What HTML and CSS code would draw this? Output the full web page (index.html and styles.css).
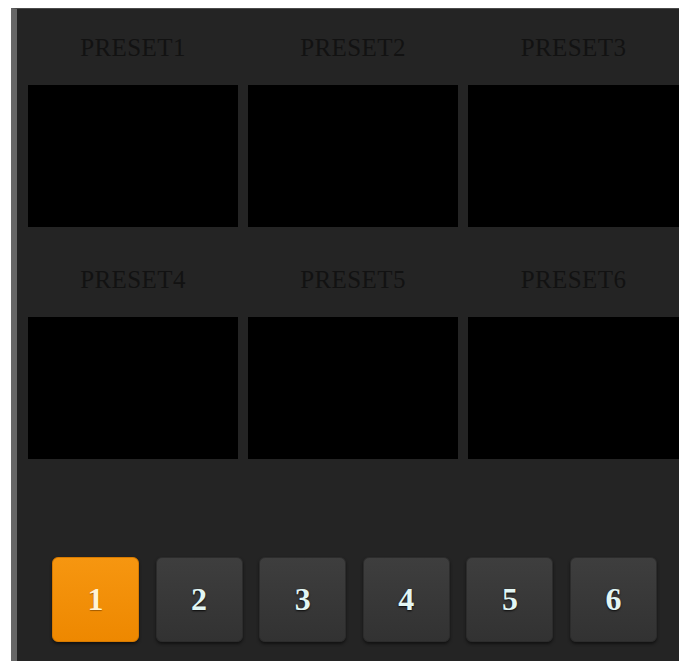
FILE: index.html
```html
<!DOCTYPE html>
<html lang="en">
<head>
    <meta charset="UTF-8">
    <meta name="viewport" content="width=device-width, initial-scale=1.0">
    <title>Presets</title>
    <link rel="stylesheet" href="styles.css">
</head>
<body>
    <div class="panel">
        <div class="preset-grid">
            <div class="preset">
                <div class="preset-label">PRESET1</div>
                <div class="preset-view"></div>
            </div>
            <div class="preset">
                <div class="preset-label">PRESET2</div>
                <div class="preset-view"></div>
            </div>
            <div class="preset">
                <div class="preset-label">PRESET3</div>
                <div class="preset-view"></div>
            </div>
            <div class="preset second-row">
                <div class="preset-label">PRESET4</div>
                <div class="preset-view"></div>
            </div>
            <div class="preset second-row">
                <div class="preset-label">PRESET5</div>
                <div class="preset-view"></div>
            </div>
            <div class="preset second-row">
                <div class="preset-label">PRESET6</div>
                <div class="preset-view"></div>
            </div>
        </div>
        <div class="page-buttons">
            <button class="page-button active">1</button>
            <button class="page-button">2</button>
            <button class="page-button">3</button>
            <button class="page-button">4</button>
            <button class="page-button">5</button>
            <button class="page-button">6</button>
        </div>
    </div>
</body>
</html>
```

FILE: styles.css
```css
body {
    margin: 0;
    padding: 0;
    background-color: #ffffff;
    font-family: "Liberation Serif", serif;
}
.panel {
    width: 662px;
    height: 652px;
    margin: 8px 0 0 11px;
    background-color: #242424;
    border-left: 6px solid #676767;
    border-top: 1px solid #4a4a4a;
    display: flex;
    flex-direction: column;
}
.preset-grid {
    display: grid;
    grid-template-columns: 210px 210px 211px;
    column-gap: 10px;
    padding-left: 11px;
}
.preset {
    display: flex;
    flex-direction: column;
}
.second-row {
    margin-top: 14px;
}
.preset-label {
    height: 76px;
    display: flex;
    align-items: center;
    justify-content: center;
    color: #121212;
    font-size: 25px;
    letter-spacing: 0.4px;
    padding-top: 1px;
    box-sizing: border-box;
}
.preset-view {
    height: 142px;
    background-color: #000000;
}
.page-buttons {
    display: flex;
    gap: 16.6px;
    padding-left: 35px;
    margin-top: 98px;
}
.page-button {
    width: 87px;
    height: 85px;
    border-radius: 6px;
    border: 1px solid #2c2c2c;
    background: linear-gradient(#3e3e3e, #323232);
    box-shadow: 0 2px 3px #121212;
    color: #e2f6f4;
    font-family: "Liberation Serif", serif;
    font-weight: bold;
    font-size: 32px;
    text-shadow: 0 1px 2px #0a0a0a;
    cursor: pointer;
    padding: 0;
}
.page-button.active {
    background: linear-gradient(#f69610, #ee8800);
    border-color: #d77a00;
    color: #fff4d6;
    text-shadow: 0 1px 1px #a05a00;
}
```
